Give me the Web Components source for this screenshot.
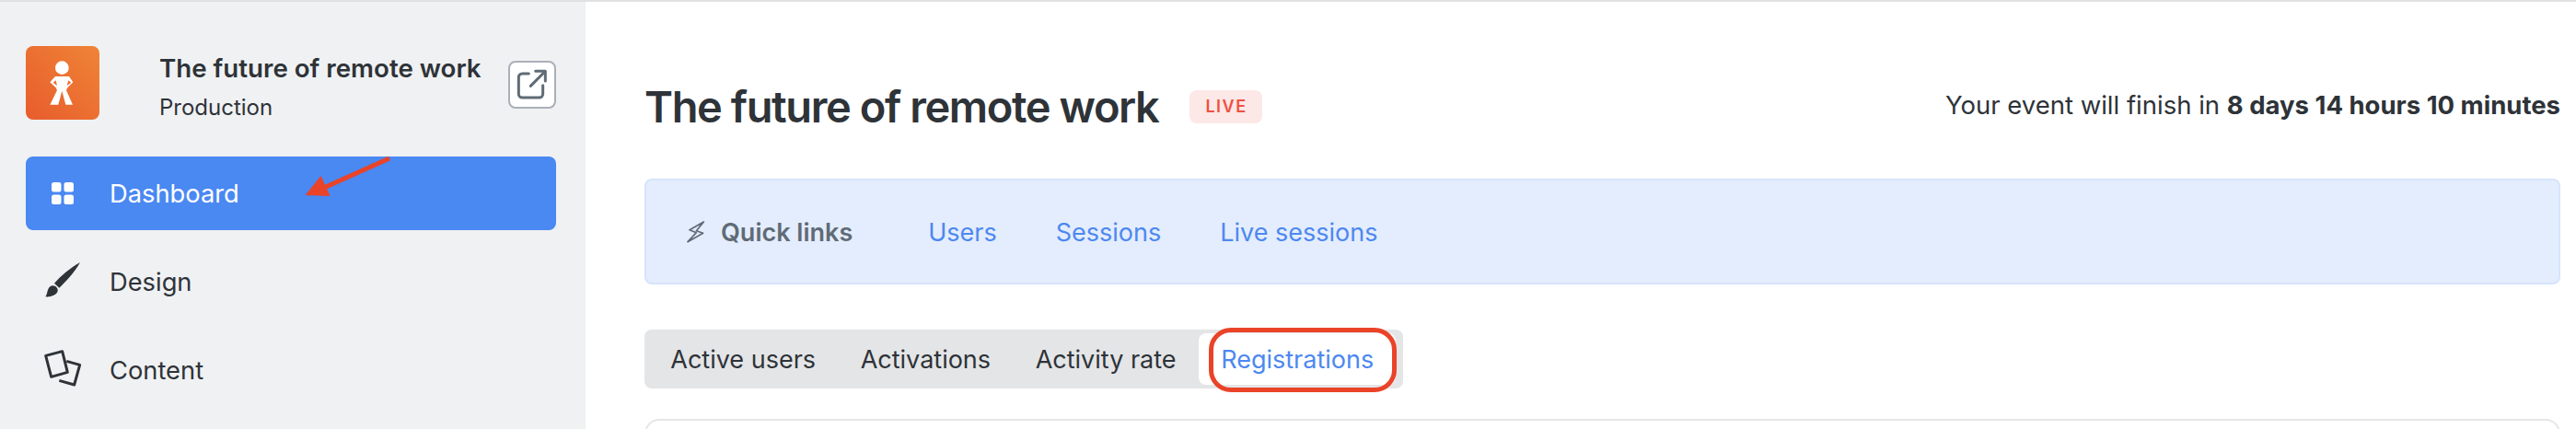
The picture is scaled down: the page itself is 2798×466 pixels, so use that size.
<!DOCTYPE html>
<html>
<head>
<meta charset="utf-8">
<style>
  html, body { margin: 0; height: 466px; overflow: hidden; background: #fff; }
  body { font-family: Inter, "Liberation Sans", sans-serif; color: #2e3338; }
</style>
</head>
<body>
<event-app>
  <event-sidebar slot="side" heading="The future of remote work" env="Production">
    <nav-item active icon="grid">Dashboard</nav-item>
    <nav-item icon="brush">Design</nav-item>
    <nav-item icon="cards">Content</nav-item>
  </event-sidebar>
  <event-main slot="main" heading="The future of remote work">
    <span slot="countdown">Your event will finish in <b>8 days 14 hours 10 minutes</b></span>
    <quick-links slot="links">
      <a>Users</a>
      <a>Sessions</a>
      <a>Live sessions</a>
    </quick-links>
    <tab-strip slot="tabs">
      <tab-item>Active users</tab-item>
      <tab-item>Activations</tab-item>
      <tab-item>Activity rate</tab-item>
      <tab-item active>Registrations</tab-item>
    </tab-strip>
  </event-main>
</event-app>

<script>
  function make(html) {
    var t = document.createElement('template');
    t.innerHTML = html;
    return t;
  }

  function define(name, html, extra) {
    var tpl = make(html);
    class El extends HTMLElement {
      constructor() {
        super();
        this.attachShadow({ mode: 'open' }).appendChild(tpl.content.cloneNode(true));
      }
      connectedCallback() {
        if (extra) extra.call(this, this.shadowRoot);
      }
    }
    customElements.define(name, El);
  }

  var ICONS = {
    grid: '<svg viewBox="0 0 40 40" width="40" height="40" fill="#fff"><rect x="8" y="8" width="10.5" height="10.5" rx="2.5"/><rect x="21.5" y="8" width="10.5" height="10.5" rx="2.5"/><rect x="8" y="21.5" width="10.5" height="10.5" rx="2.5"/><rect x="21.5" y="21.5" width="10.5" height="10.5" rx="2.5"/></svg>',
    brush: '<svg viewBox="54 51 120 120" width="40" height="40" fill="#2e3338" style="overflow:visible"><path d="M171 48C150 85 125 110 103 131L87 116C110 90 140 65 171 48Z"/><path d="M58 160C66 152 62 128 80 124C90 122 100 132 98 142C94 156 72 162 58 160Z"/></svg>',
    cards: '<svg viewBox="54 339 120 120" width="40" height="40" fill="none" stroke="#2e3338" stroke-width="9" stroke-linejoin="round" style="overflow:visible"><path d="M59 352L113 338L130 406L77 421Z"/><path d="M127 370L170 382L152 447L103 433"/></svg>'
  };

  define('event-app', `
    <style>
      :host { display: flex; box-sizing: border-box; width: 2798px; height: 466px; border-top: 2px solid #e0e1e3; overflow: hidden; position: relative; }
    </style>
    <slot name="side"></slot>
    <slot name="main"></slot>`);

  define('event-sidebar', `
    <style>
      :host { display: block; box-sizing: border-box; flex: none; width: 636px; height: 100%; background: #f0f1f3; padding: 48px 32px 0 28px; position: relative; }
      .head { display: flex; align-items: center; height: 80px; margin-bottom: 40px; }
      .logo { flex: none; width: 80px; height: 80px; border-radius: 8px; background: linear-gradient(to top right, #e85c2d, #ef8436); }
      .logo svg { display: block; }
      .names { margin-left: 65px; }
      .title { font-size: 27.700px; font-weight: 600; line-height: 32px; margin-top: 8px; white-space: nowrap; }
      .env { font-size: 24px; line-height: 28px; margin-top: 13px; }
      .open { flex: none; box-sizing: border-box; width: 52px; height: 52px; margin-left: auto; margin-top: 4px; border: 2px solid #a9b0b8; border-radius: 8px; background: #fff; }
      .open svg { display: block; }
      nav { display: flex; flex-direction: column; gap: 16px; }
      .arrow { position: absolute; left: 325px; top: 88px; width: 105px; height: 125px; }
    </style>
    <div class="head">
      <div class="logo">
        <svg viewBox="54 60 240 240" width="80" height="80">
          <circle cx="172" cy="131" r="22" fill="#fff"/>
          <path fill="#fff" fill-rule="evenodd" d="M150 159H195L208 178L190 196L186 204L207 251H184L172 206L160 251H133L156 204L152 196L133 178ZM152 172L143 179L156 189ZM193 172L202 179L188 189Z"/>
        </svg>
      </div>
      <div class="names">
        <div class="title"></div>
        <div class="env"></div>
      </div>
      <div class="open">
        <svg viewBox="73 54 144 144" width="48" height="48" fill="none" stroke="#5f6b76" stroke-width="9" stroke-linecap="round" stroke-linejoin="round">
          <path d="M134 90H113A12 12 0 0 0 101 102V156A12 12 0 0 0 113 168H168A12 12 0 0 0 180 156V128"/>
          <path d="M140 130L186 84"/>
          <path d="M156 82H188V114"/>
        </svg>
      </div>
    </div>
    <nav><slot></slot></nav>
    <svg class="arrow" viewBox="325 88 105 125">
      <path d="M423 170L345 205" stroke="#ea4328" stroke-width="5" fill="none"/>
      <path d="M348.500 189L358.600 211L331.600 210Z" fill="#ea4328"/>
    </svg>`, function (root) {
    root.querySelector('.title').textContent = this.getAttribute('heading');
    root.querySelector('.env').textContent = this.getAttribute('env');
  });

  define('nav-item', `
    <style>
      :host { display: flex; align-items: center; box-sizing: border-box; width: 576px; height: 80px; padding-left: 20px; border-radius: 8px; font-size: 27.300px; color: #2e3338; }
      :host([active]) { background: #4a88f2; color: #fff; }
      .icon { flex: none; width: 40px; height: 40px; margin-right: 31px; }
      .icon svg { display: block; }
    </style>
    <span class="icon"></span><slot></slot>`, function (root) {
    root.querySelector('.icon').innerHTML = ICONS[this.getAttribute('icon')];
  });

  define('event-main', `
    <style>
      :host { display: block; box-sizing: border-box; flex: 1; min-width: 0; padding: 0 17px 0 64px; }
      .top { display: flex; align-items: center; box-sizing: border-box; height: 192px; padding-top: 36px; }
      h1 { margin: 0; font-size: 47px; font-weight: 600; letter-spacing: -1.400px; line-height: 56px; white-space: nowrap; }
      .badge { box-sizing: border-box; width: 79px; height: 36px; margin-left: 34px; border-radius: 8px; background: #fce8e6; color: #f05043; font-size: 18px; font-weight: 600; letter-spacing: 1.500px; line-height: 36px; text-align: center; }
      .count { margin-left: auto; font-size: 27.500px; margin-top: -5px; white-space: nowrap; }
      .card { height: 60px; margin-top: 33px; border: 2px solid #e5e6e8; border-bottom: 0; border-radius: 16px 16px 0 0; box-sizing: border-box; }
    </style>
    <div class="top">
      <h1></h1>
      <span class="badge">LIVE</span>
      <span class="count"><slot name="countdown"></slot></span>
    </div>
    <slot name="links"></slot>
    <slot name="tabs"></slot>
    <div class="card"></div>`, function (root) {
    root.querySelector('h1').textContent = this.getAttribute('heading');
  });

  define('quick-links', `
    <style>
      :host { display: flex; align-items: center; box-sizing: border-box; height: 115px; margin-bottom: 49px; padding: 1px 0 0 43px; border: 2px solid #d6e4fb; border-radius: 8px; background: #e4edfd; font-size: 27px; }
      svg { flex: none; display: block; margin-right: 16px; }
      .label { font-weight: 600; color: #5f6b76; margin-right: 82px; white-space: nowrap; }
      .links { display: flex; gap: 64px; color: #4d88f0; }
    </style>
    <svg viewBox="70 60 66 78" width="22" height="26" fill="none" stroke="#5f6b76" stroke-width="5" stroke-linejoin="round">
      <path d="M128 66L82 92L104 101L76 131L126 103L104 95Z"/>
    </svg>
    <span class="label">Quick links</span>
    <div class="links"><slot></slot></div>`);

  define('tab-strip', `
    <style>
      :host { display: flex; align-items: center; box-sizing: border-box; width: 824px; height: 64px; padding: 0 4px; border-radius: 8px; background: #e4e5e7; position: relative; }
      .ring { position: absolute; left: 613px; top: -2px; width: 204px; height: 70px; box-sizing: border-box; border: 5px solid #ea4328; border-radius: 24px; }
    </style>
    <slot></slot>
    <div class="ring"></div>`);

  define('tab-item', `
    <style>
      :host { display: block; box-sizing: border-box; height: 56px; padding: 0 24.300px; border-radius: 8px; font-size: 27px; line-height: 57px; white-space: nowrap; }
      :host([active]) { background: #fff; color: #4d88f0; }
    </style>
    <slot></slot>`);
</script>
</body>
</html>
